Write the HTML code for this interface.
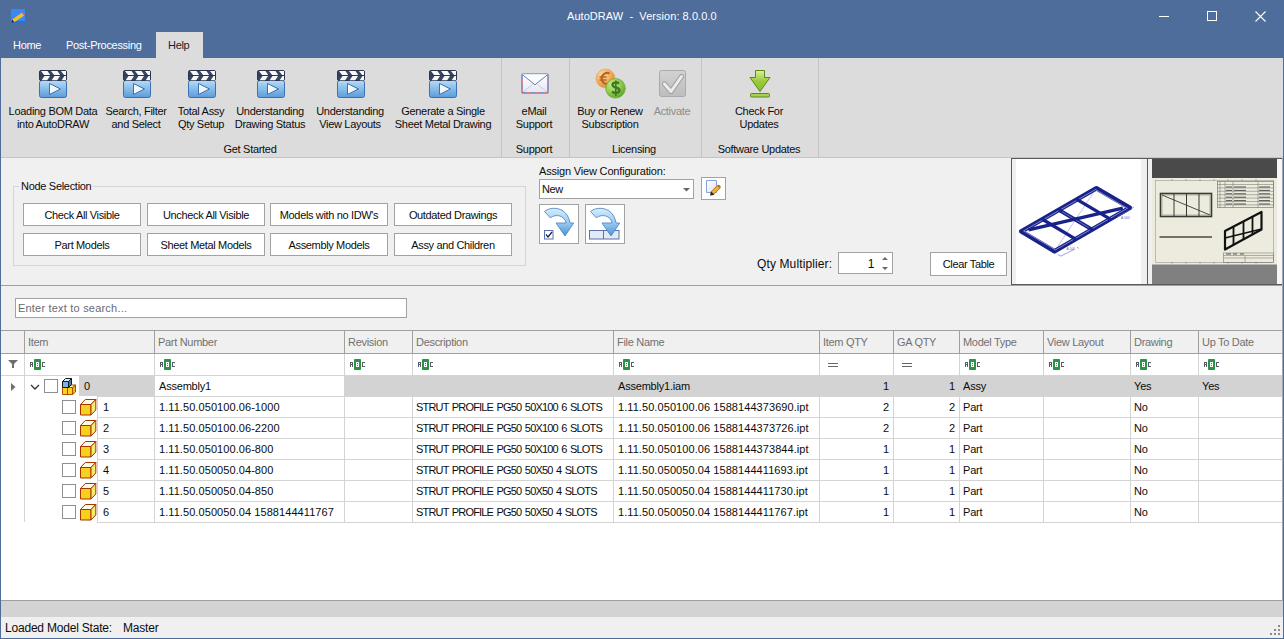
<!DOCTYPE html>
<html><head><meta charset="utf-8">
<style>
*{margin:0;padding:0;box-sizing:border-box}
html,body{width:1284px;height:639px;overflow:hidden;background:#f0f0f0}
body{position:relative;font-family:"Liberation Sans",sans-serif;font-size:11px;color:#0c0c0c}
.a{position:absolute}
.t{position:absolute;white-space:nowrap;line-height:13px;letter-spacing:-0.3px}
#title{left:0;top:0;width:1284px;height:58px;background:#4e6d9b}
#ribbon{left:1px;top:58px;width:1283px;height:100px;background:#dcdcdc;border-bottom:1px solid #c4c4c4}
.sep{position:absolute;top:0;width:1px;height:99px;background:#c4c4c4}
.lbl{text-align:center}
.btn{position:absolute;background:#fff;border:1px solid #a2a2a2}
.btn span{position:absolute;left:0;right:0;top:5px;text-align:center;line-height:13px;white-space:nowrap;letter-spacing:-0.35px}
#panel{left:1px;top:158px;width:1283px;height:128px;background:#f0f0f0;border-bottom:1px solid #a0a0a0}
#grid{left:1px;top:286px;width:1282px;height:315px;background:#fff}
.vl{position:absolute;width:1px;background:#d2d2d2}
.hl{position:absolute;height:1px;background:#d2d2d2}
.hd{color:#707070}
</style></head><body>
<!-- title bar -->
<div id="title" class="a"></div>
<!-- app icon -->
<svg class="a" style="left:11px;top:9px" width="14" height="14" viewBox="0 0 14 14">
<rect x="0" y="0" width="14" height="14" fill="#3b88f2"/>
<rect x="0" y="12" width="14" height="2" fill="#2f6fd0"/>
<path d="M1.2 10.5L9.8 4.6L11.8 7.6L3.2 13.2Z" fill="#f5c11a"/>
<path d="M9.8 4.6L11 3.8L13 6.8L11.8 7.6Z" fill="#c8ccd0"/>
<path d="M11 3.8L12.2 3L14 5.9L13 6.8Z" fill="#f05a40"/>
<path d="M1.2 10.5L3.2 13.2L0.8 13.2Z" fill="#222"/>
</svg>
<div class="t" style="left:567px;top:10px;color:#fff;font-size:11px;letter-spacing:0.05px">AutoDRAW&nbsp; -&nbsp; Version: 8.0.0.0</div>
<!-- window controls -->
<div class="a" style="left:1159px;top:16px;width:10px;height:1px;background:#fff"></div>
<div class="a" style="left:1207px;top:11px;width:10px;height:10px;border:1px solid #fff"></div>
<svg class="a" style="left:1255px;top:11px" width="11" height="11" viewBox="0 0 11 11"><path d="M0.5 0.5 L10.5 10.5 M10.5 0.5 L0.5 10.5" stroke="#fff" stroke-width="1.1"/></svg>
<!-- tabs -->
<div class="t" style="left:13px;top:39px;color:#fff">Home</div>
<div class="t" style="left:66px;top:39px;color:#fff">Post-Processing</div>
<div class="a" style="left:156px;top:32px;width:47px;height:27px;background:#dcdcdc"></div>
<div class="t" style="left:168px;top:39px;color:#1e1e1e">Help</div>

<!-- ribbon -->
<div id="ribbon" class="a">
  <div class="sep" style="left:500px"></div>
  <div class="sep" style="left:568px"></div>
  <div class="sep" style="left:700px"></div>
  <div class="sep" style="left:817px"></div>
</div>

<!-- ribbon labels -->
<div class="t lbl" style="left:3px;top:105px;width:100px">Loading BOM Data<br>into AutoDRAW</div>
<div class="t lbl" style="left:96px;top:105px;width:80px">Search, Filter<br>and Select</div>
<div class="t lbl" style="left:166px;top:105px;width:70px">Total Assy<br>Qty Setup</div>
<div class="t lbl" style="left:225px;top:105px;width:90px">Understanding<br>Drawing Status</div>
<div class="t lbl" style="left:305px;top:105px;width:90px">Understanding<br>View Layouts</div>
<div class="t lbl" style="left:385px;top:105px;width:116px">Generate a Single<br>Sheet Metal Drawing</div>
<div class="t lbl" style="left:504px;top:105px;width:60px">eMail<br>Support</div>
<div class="t lbl" style="left:570px;top:105px;width:80px">Buy or Renew<br>Subscription</div>
<div class="t lbl" style="left:642px;top:105px;width:60px;color:#8c8c8c">Activate</div>
<div class="t lbl" style="left:719px;top:105px;width:80px">Check For<br>Updates</div>
<div class="t lbl" style="left:200px;top:143px;width:100px">Get Started</div>
<div class="t lbl" style="left:504px;top:143px;width:60px">Support</div>
<div class="t lbl" style="left:594px;top:143px;width:80px">Licensing</div>
<div class="t lbl" style="left:709px;top:143px;width:100px">Software Updates</div>

<!-- panel -->
<div id="panel" class="a"></div>
<div class="a" style="left:13px;top:186px;width:513px;height:80px;border:1px solid #d5d5d5"></div>
<div class="t" style="left:19px;top:180px;padding:0 2px;background:#f0f0f0">Node Selection</div>
<div class="btn" style="left:23px;top:203px;width:118px;height:23px"><span>Check All Visible</span></div>
<div class="btn" style="left:147px;top:203px;width:118px;height:23px"><span>Uncheck All Visible</span></div>
<div class="btn" style="left:270px;top:203px;width:118px;height:23px"><span>Models with no IDW's</span></div>
<div class="btn" style="left:394px;top:203px;width:118px;height:23px"><span>Outdated Drawings</span></div>
<div class="btn" style="left:23px;top:233px;width:118px;height:23px"><span>Part Models</span></div>
<div class="btn" style="left:147px;top:233px;width:118px;height:23px"><span>Sheet Metal Models</span></div>
<div class="btn" style="left:270px;top:233px;width:118px;height:23px"><span>Assembly Models</span></div>
<div class="btn" style="left:394px;top:233px;width:118px;height:23px"><span>Assy and Children</span></div>

<div class="t" style="left:539px;top:165px;letter-spacing:-0.18px">Assign View Configuration:</div>
<div class="btn" style="left:539px;top:179px;width:155px;height:20px"><span style="text-align:left;left:2px;top:3px">New</span></div>
<svg class="a" style="left:683px;top:188px" width="7" height="4" viewBox="0 0 7 4"><path d="M0 0H7L3.5 3.5Z" fill="#666"/></svg>
<div class="btn" style="left:701px;top:177px;width:25px;height:23px"></div>
<div class="btn" style="left:539px;top:204px;width:40px;height:40px"></div>
<div class="btn" style="left:585px;top:204px;width:40px;height:40px"></div>
<div class="t" style="left:757px;top:258px;font-size:12px;letter-spacing:0.12px">Qty Multiplier:</div>
<div class="btn" style="left:838px;top:252px;width:55px;height:22px"><span style="text-align:right;left:auto;right:18px;top:5px;font-size:12px">1</span></div>
<svg class="a" style="left:882px;top:257px" width="6" height="14" viewBox="0 0 6 14"><path d="M0 3L3 0L6 3ZM0 10L3 13L6 10Z" fill="#6a6a6a"/></svg>
<div class="btn" style="left:930px;top:252px;width:77px;height:24px"><span>Clear Table</span></div>
<!-- thumbnails -->
<div class="a" style="left:1011px;top:158px;width:271px;height:127px;background:#f0f0f0;border-top:1px solid #5a5a5a;border-left:1px solid #5a5a5a;border-bottom:1px solid #5a5a5a"></div>
<div class="a" style="left:1016px;top:159px;width:125px;height:125px;background:#fff"></div>
<div class="a" style="left:1147px;top:159px;width:1px;height:125px;background:#5a5a5a"></div>
<div class="a" style="left:1277px;top:159px;width:5px;height:125px;background:#f6f6f6"></div>
<svg class="a" style="left:0;top:0" width="1284" height="639" viewBox="0 0 1284 639"><path d="M1021.2,231.4L1096.4,188.2L1129.8,207.8L1054.5,251.3Z" fill="none" stroke="#18228a" stroke-width="4.6" stroke-linejoin="round"/><path d="M1023.6,230.9L1095.5,189.6L1127.4,208.3L1055.4,249.9Z" fill="none" stroke="#c8cdf0" stroke-width="0.6"/><path d="M1093.0,193.2L1057.9,246.3" stroke="#8088d0" stroke-width="0.5"/><path d="M1042.3,219.3L1075.6,239.1" stroke="#18228a" stroke-width="3.4"/><path d="M1058.8,209.8L1092.2,229.6" stroke="#18228a" stroke-width="3.8"/><path d="M1076.8,199.4L1110.2,219.1" stroke="#18228a" stroke-width="3.4"/><path d="M1062.1,211.8L1088.8,227.6" stroke="#b8c0ee" stroke-width="0.5"/><path d="M1028.5,229.8L1122.8,208.2" stroke="#18228a" stroke-width="3.4"/><path d="M1058 254.5l3 1.8M1061 256l13-6.5M1077 247l2 1.5M1117 217l12-6.5M1131 209l3-2" stroke="#5a64c0" stroke-width="0.6" fill="none"/><text x="1066.5" y="250" font-size="3.2" fill="#5a64c0" font-family="Liberation Sans">A-500</text><text x="1121" y="218.5" font-size="3.2" fill="#5a64c0" font-family="Liberation Sans">A-500</text><rect x="1152" y="159" width="125" height="19" fill="#4a4a4a"/><rect x="1152" y="178" width="125" height="86.5" fill="#ecebde"/><rect x="1152" y="264.5" width="125" height="19.5" fill="#808080"/><rect x="1155.5" y="180.5" width="118" height="82" fill="none" stroke="#9a9a90" stroke-width="0.6"/><rect x="1160.5" y="193.5" width="51" height="23" fill="none" stroke="#3a3a35" stroke-width="1.6"/><rect x="1162" y="195" width="48" height="20" fill="none" stroke="#8a8a80" stroke-width="0.6"/><path d="M1174 194v22M1186.5 194v22M1199 194v22" stroke="#3a3a35" stroke-width="1"/><path d="M1162 195L1210 215" stroke="#3a3a35" stroke-width="0.9"/><path d="M1159.5 237h52.5" stroke="#4a4a45" stroke-width="1.4"/><rect x="1217.5" y="181.5" width="56" height="26" fill="none" stroke="#6a6a65" stroke-width="0.6"/><path d="M1217.5 184.5h56" stroke="#6a6a65" stroke-width="0.5"/><path d="M1217.5 187.9h56" stroke="#6a6a65" stroke-width="0.5"/><path d="M1217.5 191.3h56" stroke="#6a6a65" stroke-width="0.5"/><path d="M1217.5 194.7h56" stroke="#6a6a65" stroke-width="0.5"/><path d="M1217.5 198.1h56" stroke="#6a6a65" stroke-width="0.5"/><path d="M1217.5 201.5h56" stroke="#6a6a65" stroke-width="0.5"/><path d="M1217.5 204.9h56" stroke="#6a6a65" stroke-width="0.5"/><path d="M1220 181.5v26M1225 181.5v26M1233 181.5v26M1258 181.5v26" stroke="#6a6a65" stroke-width="0.5"/><path d="M1226 187.0h6M1234 187.0h12M1259 187.0h11" stroke="#444" stroke-width="0.9"/><path d="M1226 190.4h6M1234 190.4h12M1259 190.4h11" stroke="#444" stroke-width="0.9"/><path d="M1226 193.8h6M1234 193.8h12M1259 193.8h11" stroke="#444" stroke-width="0.9"/><path d="M1226 197.2h6M1234 197.2h12M1259 197.2h11" stroke="#444" stroke-width="0.9"/><path d="M1226 200.6h6M1234 200.6h12M1259 200.6h11" stroke="#444" stroke-width="0.9"/><path d="M1226 204.0h6M1234 204.0h12M1259 204.0h11" stroke="#444" stroke-width="0.9"/><path d="M1225 231L1261.5 212V229.5L1225 249.5Z" fill="none" stroke="#111" stroke-width="2.2" stroke-linejoin="round"/><path d="M1233.5 226.5V245M1243.5 221.5V239.5M1252.5 216.5V234.5" stroke="#111" stroke-width="1.8"/><path d="M1225 238L1261.5 229" stroke="#111" stroke-width="1.4"/><rect x="1223.5" y="253" width="50" height="9.5" fill="none" stroke="#6a6a65" stroke-width="0.5"/><path d="M1223.5 255.5h50M1245 255.5v7M1223.5 258h50" stroke="#6a6a65" stroke-width="0.5"/><path d="M1226 254h5M1233 254h4M1240 254h4" stroke="#333" stroke-width="0.8"/><path d="M1172 179v1.5M1172 262v1.5" stroke="#555" stroke-width="0.5"/><path d="M1186 179v1.5M1186 262v1.5" stroke="#555" stroke-width="0.5"/><path d="M1200 179v1.5M1200 262v1.5" stroke="#555" stroke-width="0.5"/><path d="M1214 179v1.5M1214 262v1.5" stroke="#555" stroke-width="0.5"/><path d="M1228 179v1.5M1228 262v1.5" stroke="#555" stroke-width="0.5"/><path d="M1242 179v1.5M1242 262v1.5" stroke="#555" stroke-width="0.5"/><path d="M1256 179v1.5M1256 262v1.5" stroke="#555" stroke-width="0.5"/></svg>


<svg class="a" style="left:39px;top:70px" width="28" height="28" viewBox="0 0 28 28">
<defs><linearGradient id="cg39" x1="0" y1="0" x2="0" y2="1"><stop offset="0" stop-color="#b4dcf8"/><stop offset="1" stop-color="#5b9bdb"/></linearGradient>
<linearGradient id="pg39" x1="0" y1="0" x2="1" y2="1"><stop offset="0" stop-color="#ffffff"/><stop offset="1" stop-color="#dfe8f2"/></linearGradient></defs>
<rect x="0.5" y="10.5" width="27" height="17" rx="2" fill="url(#cg39)" stroke="#3c6fb3"/>
<rect x="0.5" y="0.5" width="27" height="10" rx="1.5" fill="#3a4660" stroke="#2b3550"/>
<clipPath id="cc39"><rect x="1" y="1" width="26" height="9.5"/></clipPath>
<g clip-path="url(#cc39)" fill="#fafafa"><path d="M2 1h6.5l3 4.5h-6zM12 1h6.5l3 4.5h-6zM22 1h6.5l3 4.5h-6z"/>
<path d="M5.5 6h5.5l-3 4.5h-5.5zM15.5 6h5.5l-3 4.5h-5.5zM25.5 6h5.5l-3 4.5h-5.5z"/></g>
<path d="M1 5.5h26" stroke="#2b3550" stroke-width="1"/>
<path d="M10.5 13.5v11l11-5.5z" fill="url(#pg39)" stroke="#3c6fb3" stroke-width="1"/>
</svg>
<svg class="a" style="left:123px;top:70px" width="28" height="28" viewBox="0 0 28 28">
<defs><linearGradient id="cg123" x1="0" y1="0" x2="0" y2="1"><stop offset="0" stop-color="#b4dcf8"/><stop offset="1" stop-color="#5b9bdb"/></linearGradient>
<linearGradient id="pg123" x1="0" y1="0" x2="1" y2="1"><stop offset="0" stop-color="#ffffff"/><stop offset="1" stop-color="#dfe8f2"/></linearGradient></defs>
<rect x="0.5" y="10.5" width="27" height="17" rx="2" fill="url(#cg123)" stroke="#3c6fb3"/>
<rect x="0.5" y="0.5" width="27" height="10" rx="1.5" fill="#3a4660" stroke="#2b3550"/>
<clipPath id="cc123"><rect x="1" y="1" width="26" height="9.5"/></clipPath>
<g clip-path="url(#cc123)" fill="#fafafa"><path d="M2 1h6.5l3 4.5h-6zM12 1h6.5l3 4.5h-6zM22 1h6.5l3 4.5h-6z"/>
<path d="M5.5 6h5.5l-3 4.5h-5.5zM15.5 6h5.5l-3 4.5h-5.5zM25.5 6h5.5l-3 4.5h-5.5z"/></g>
<path d="M1 5.5h26" stroke="#2b3550" stroke-width="1"/>
<path d="M10.5 13.5v11l11-5.5z" fill="url(#pg123)" stroke="#3c6fb3" stroke-width="1"/>
</svg>
<svg class="a" style="left:188px;top:70px" width="28" height="28" viewBox="0 0 28 28">
<defs><linearGradient id="cg188" x1="0" y1="0" x2="0" y2="1"><stop offset="0" stop-color="#b4dcf8"/><stop offset="1" stop-color="#5b9bdb"/></linearGradient>
<linearGradient id="pg188" x1="0" y1="0" x2="1" y2="1"><stop offset="0" stop-color="#ffffff"/><stop offset="1" stop-color="#dfe8f2"/></linearGradient></defs>
<rect x="0.5" y="10.5" width="27" height="17" rx="2" fill="url(#cg188)" stroke="#3c6fb3"/>
<rect x="0.5" y="0.5" width="27" height="10" rx="1.5" fill="#3a4660" stroke="#2b3550"/>
<clipPath id="cc188"><rect x="1" y="1" width="26" height="9.5"/></clipPath>
<g clip-path="url(#cc188)" fill="#fafafa"><path d="M2 1h6.5l3 4.5h-6zM12 1h6.5l3 4.5h-6zM22 1h6.5l3 4.5h-6z"/>
<path d="M5.5 6h5.5l-3 4.5h-5.5zM15.5 6h5.5l-3 4.5h-5.5zM25.5 6h5.5l-3 4.5h-5.5z"/></g>
<path d="M1 5.5h26" stroke="#2b3550" stroke-width="1"/>
<path d="M10.5 13.5v11l11-5.5z" fill="url(#pg188)" stroke="#3c6fb3" stroke-width="1"/>
</svg>
<svg class="a" style="left:257px;top:70px" width="28" height="28" viewBox="0 0 28 28">
<defs><linearGradient id="cg257" x1="0" y1="0" x2="0" y2="1"><stop offset="0" stop-color="#b4dcf8"/><stop offset="1" stop-color="#5b9bdb"/></linearGradient>
<linearGradient id="pg257" x1="0" y1="0" x2="1" y2="1"><stop offset="0" stop-color="#ffffff"/><stop offset="1" stop-color="#dfe8f2"/></linearGradient></defs>
<rect x="0.5" y="10.5" width="27" height="17" rx="2" fill="url(#cg257)" stroke="#3c6fb3"/>
<rect x="0.5" y="0.5" width="27" height="10" rx="1.5" fill="#3a4660" stroke="#2b3550"/>
<clipPath id="cc257"><rect x="1" y="1" width="26" height="9.5"/></clipPath>
<g clip-path="url(#cc257)" fill="#fafafa"><path d="M2 1h6.5l3 4.5h-6zM12 1h6.5l3 4.5h-6zM22 1h6.5l3 4.5h-6z"/>
<path d="M5.5 6h5.5l-3 4.5h-5.5zM15.5 6h5.5l-3 4.5h-5.5zM25.5 6h5.5l-3 4.5h-5.5z"/></g>
<path d="M1 5.5h26" stroke="#2b3550" stroke-width="1"/>
<path d="M10.5 13.5v11l11-5.5z" fill="url(#pg257)" stroke="#3c6fb3" stroke-width="1"/>
</svg>
<svg class="a" style="left:337px;top:70px" width="28" height="28" viewBox="0 0 28 28">
<defs><linearGradient id="cg337" x1="0" y1="0" x2="0" y2="1"><stop offset="0" stop-color="#b4dcf8"/><stop offset="1" stop-color="#5b9bdb"/></linearGradient>
<linearGradient id="pg337" x1="0" y1="0" x2="1" y2="1"><stop offset="0" stop-color="#ffffff"/><stop offset="1" stop-color="#dfe8f2"/></linearGradient></defs>
<rect x="0.5" y="10.5" width="27" height="17" rx="2" fill="url(#cg337)" stroke="#3c6fb3"/>
<rect x="0.5" y="0.5" width="27" height="10" rx="1.5" fill="#3a4660" stroke="#2b3550"/>
<clipPath id="cc337"><rect x="1" y="1" width="26" height="9.5"/></clipPath>
<g clip-path="url(#cc337)" fill="#fafafa"><path d="M2 1h6.5l3 4.5h-6zM12 1h6.5l3 4.5h-6zM22 1h6.5l3 4.5h-6z"/>
<path d="M5.5 6h5.5l-3 4.5h-5.5zM15.5 6h5.5l-3 4.5h-5.5zM25.5 6h5.5l-3 4.5h-5.5z"/></g>
<path d="M1 5.5h26" stroke="#2b3550" stroke-width="1"/>
<path d="M10.5 13.5v11l11-5.5z" fill="url(#pg337)" stroke="#3c6fb3" stroke-width="1"/>
</svg>
<svg class="a" style="left:429px;top:70px" width="28" height="28" viewBox="0 0 28 28">
<defs><linearGradient id="cg429" x1="0" y1="0" x2="0" y2="1"><stop offset="0" stop-color="#b4dcf8"/><stop offset="1" stop-color="#5b9bdb"/></linearGradient>
<linearGradient id="pg429" x1="0" y1="0" x2="1" y2="1"><stop offset="0" stop-color="#ffffff"/><stop offset="1" stop-color="#dfe8f2"/></linearGradient></defs>
<rect x="0.5" y="10.5" width="27" height="17" rx="2" fill="url(#cg429)" stroke="#3c6fb3"/>
<rect x="0.5" y="0.5" width="27" height="10" rx="1.5" fill="#3a4660" stroke="#2b3550"/>
<clipPath id="cc429"><rect x="1" y="1" width="26" height="9.5"/></clipPath>
<g clip-path="url(#cc429)" fill="#fafafa"><path d="M2 1h6.5l3 4.5h-6zM12 1h6.5l3 4.5h-6zM22 1h6.5l3 4.5h-6z"/>
<path d="M5.5 6h5.5l-3 4.5h-5.5zM15.5 6h5.5l-3 4.5h-5.5zM25.5 6h5.5l-3 4.5h-5.5z"/></g>
<path d="M1 5.5h26" stroke="#2b3550" stroke-width="1"/>
<path d="M10.5 13.5v11l11-5.5z" fill="url(#pg429)" stroke="#3c6fb3" stroke-width="1"/>
</svg>
<svg class="a" style="left:521px;top:73px" width="28" height="21" viewBox="0 0 28 21">
<defs><linearGradient id="eg" x1="0" y1="0" x2="0" y2="1"><stop offset="0" stop-color="#ffffff"/><stop offset="1" stop-color="#e4e8f0"/></linearGradient>
<pattern id="air" width="6" height="6" patternUnits="userSpaceOnUse" patternTransform="rotate(45)"><rect width="3" height="6" fill="#d83a40"/><rect x="3" width="3" height="6" fill="#3a5ab8"/></pattern></defs>
<rect x="0.5" y="0.5" width="27" height="20" rx="1.5" fill="url(#air)"/>
<rect x="1.6" y="1.2" width="24.8" height="18.2" fill="url(#eg)"/>
<rect x="0.5" y="0.5" width="27" height="1.2" fill="#c8d0e8"/>
<path d="M2 19l9.5-7.5M26 19l-9.5-7.5" stroke="#c4cad8" stroke-width="0.9" fill="none"/>
<path d="M1.2 1.5l12.8 10.3l12.8-10.3" stroke="#6a7aae" stroke-width="1" fill="#fafbfd"/>
<rect x="0.5" y="0.5" width="27" height="20" rx="1.5" fill="none" stroke="#8a98c8" stroke-width="0.6"/>
</svg>
<svg class="a" style="left:595px;top:68px" width="32" height="31" viewBox="0 0 32 31">
<defs><radialGradient id="og" cx="0.35" cy="0.3" r="0.75"><stop offset="0" stop-color="#fde0a8"/><stop offset="0.6" stop-color="#f0a850"/><stop offset="1" stop-color="#d88a38"/></radialGradient>
<radialGradient id="gg" cx="0.35" cy="0.3" r="0.75"><stop offset="0" stop-color="#c8ec90"/><stop offset="0.6" stop-color="#8cc84a"/><stop offset="1" stop-color="#5ea32a"/></radialGradient></defs>
<circle cx="10.5" cy="10.5" r="9.5" fill="url(#og)" stroke="#e8a868" stroke-width="0.8"/>
<path d="M14.5 5.5a5.5 5.5 0 1 0 0 10" stroke="#b8652a" stroke-width="2.2" fill="none"/>
<path d="M4.5 9h7M4.5 12h7" stroke="#b8652a" stroke-width="1.3"/>
<circle cx="20.5" cy="20.3" r="9.8" fill="url(#gg)" stroke="#6aac38" stroke-width="0.8"/>
<path d="M24 15.5c-1.5-1.3-6.5-1.6-6.5 1.5c0 3 7 2 7 5.3c0 3.2-5.5 3-7.5 1.5" stroke="#3f7a22" stroke-width="2.4" fill="none"/>
<path d="M20.8 12.5v15.5" stroke="#3f7a22" stroke-width="1.6"/>
</svg>
<svg class="a" style="left:659px;top:70px" width="27" height="27" viewBox="0 0 27 27">
<defs><linearGradient id="ag" x1="0" y1="0" x2="0" y2="1"><stop offset="0" stop-color="#d2d2d2"/><stop offset="1" stop-color="#bdbdbd"/></linearGradient></defs>
<rect x="0.5" y="0.5" width="26" height="26" rx="2" fill="url(#ag)" stroke="#aaaaaa"/>
<path d="M5.5 14l6.5 7.5l10.5-15" stroke="#a2a2a2" stroke-width="5" fill="none" stroke-linejoin="round" stroke-linecap="round"/>
<path d="M5.5 14l6.5 7.5l10.5-15" stroke="#ececec" stroke-width="3" fill="none" stroke-linejoin="round" stroke-linecap="round"/>
</svg>
<svg class="a" style="left:749px;top:69px" width="22" height="29" viewBox="0 0 22 29">
<defs><linearGradient id="dg" x1="0" y1="0" x2="0" y2="1"><stop offset="0" stop-color="#d8f29a"/><stop offset="0.5" stop-color="#9ccc3c"/><stop offset="1" stop-color="#88bb2a"/></linearGradient></defs>
<path d="M6.5 1.5h9v7h5.5l-10 14l-10-14h5.5z" fill="url(#dg)" stroke="#5a8a1a" stroke-width="1" stroke-linejoin="round"/>
<rect x="1.5" y="24.5" width="19" height="3.5" rx="1" fill="#a4d24a" stroke="#5a8a1a" stroke-width="1"/>
</svg>
<svg class="a" style="left:705px;top:179px" width="17" height="18" viewBox="0 0 17 18">
<defs><linearGradient id="pgd" x1="0" y1="0" x2="1" y2="1"><stop offset="0" stop-color="#ffffff"/><stop offset="1" stop-color="#dbe6f5"/></linearGradient></defs>
<path d="M1.5 1.5h10v12h-10z" fill="url(#pgd)" stroke="#8aa2e0" stroke-width="1"/>
<path d="M7.5 14L13.5 8" stroke="#b86d10" stroke-width="4.4" stroke-linecap="round"/>
<path d="M7.5 14L13.5 8" stroke="#f0b040" stroke-width="3"/>
<path d="M5 16.8l1.2-4.2l3 3z" fill="#1a2540"/>
</svg>
<svg class="a" style="left:539px;top:204px" width="40" height="40" viewBox="0 0 40 40">
<defs><linearGradient id="ba1" x1="0" y1="0" x2="0" y2="1"><stop offset="0" stop-color="#d6eefc"/><stop offset="0.55" stop-color="#94c8ee"/><stop offset="1" stop-color="#4e8fd2"/></linearGradient></defs>
<rect x="5.5" y="26.5" width="8.5" height="8.5" fill="#fff" stroke="#5a70b0"/><path d="M7 30.5l2 2.5l4-5" stroke="#1c2540" stroke-width="1.3" fill="none"/>
<path d="M5.5 7.5C11 2.5 28 1.5 31 19H34.7L26 32L17 19H27.2C25.5 11.5 17 9.5 11.3 13.8Z" fill="url(#ba1)" stroke="#5088c8" stroke-width="0.9" stroke-linejoin="round"/>
</svg>
<svg class="a" style="left:585px;top:204px" width="40" height="40" viewBox="0 0 40 40">
<defs><linearGradient id="ba2" x1="0" y1="0" x2="0" y2="1"><stop offset="0" stop-color="#d6eefc"/><stop offset="0.55" stop-color="#94c8ee"/><stop offset="1" stop-color="#4e8fd2"/></linearGradient></defs>
<rect x="4.5" y="26.5" width="29.5" height="8.5" fill="#e4eaf4" stroke="#5a70b0"/><path d="M18.5 26.5v8.5" stroke="#5a70b0"/>
<path d="M5.5 7.5C11 2.5 28 1.5 31 19H34.7L26 32L17 19H27.2C25.5 11.5 17 9.5 11.3 13.8Z" fill="url(#ba2)" stroke="#5088c8" stroke-width="0.9" stroke-linejoin="round"/>
</svg>
<!-- search -->
<div class="a" style="left:1px;top:286px;width:1282px;height:44px;background:#f0f0f0"></div>
<div class="btn" style="left:15px;top:298px;width:392px;height:20px"><span style="text-align:left;left:2px;top:3px;color:#6a6a72;letter-spacing:0.2px">Enter text to search...</span></div>

<!-- grid -->
<div class="a" style="left:1px;top:330px;width:1282px;height:271px;background:#fff;border-top:1px solid #a0a0a0;border-bottom:1px solid #a0a0a0;border-right:1px solid #a0a0a0"></div>
<div class="a" style="left:1px;top:331px;width:1281px;height:22px;background:#f0f0f0;"></div>
<div class="a" style="left:1px;top:353px;width:1281px;height:1px;background:#a0a0a0;"></div>
<div class="a" style="left:1px;top:375px;width:1281px;height:1px;background:#d4d4d4;"></div>
<div class="a" style="left:79px;top:376px;width:1203px;height:20px;background:#d3d3d3;"></div>
<div class="a" style="left:155px;top:376px;width:189px;height:20px;background:#ffffff;"></div>
<div class="a" style="left:97px;top:396px;width:1185px;height:1px;background:#d4d4d4;"></div>
<div class="a" style="left:97px;top:417px;width:1185px;height:1px;background:#d4d4d4;"></div>
<div class="a" style="left:97px;top:438px;width:1185px;height:1px;background:#d4d4d4;"></div>
<div class="a" style="left:97px;top:459px;width:1185px;height:1px;background:#d4d4d4;"></div>
<div class="a" style="left:97px;top:480px;width:1185px;height:1px;background:#d4d4d4;"></div>
<div class="a" style="left:97px;top:501px;width:1185px;height:1px;background:#d4d4d4;"></div>
<div class="a" style="left:97px;top:522px;width:1185px;height:1px;background:#d4d4d4;"></div>
<div class="a" style="left:24px;top:331px;width:1px;height:22px;background:#a0a0a0;"></div>
<div class="a" style="left:24px;top:354px;width:1px;height:168px;background:#d4d4d4;"></div>
<div class="a" style="left:154px;top:331px;width:1px;height:22px;background:#a0a0a0;"></div>
<div class="a" style="left:154px;top:354px;width:1px;height:42px;background:#d4d4d4;"></div>
<div class="a" style="left:154px;top:397px;width:1px;height:125px;background:#d4d4d4;"></div>
<div class="a" style="left:344px;top:331px;width:1px;height:22px;background:#a0a0a0;"></div>
<div class="a" style="left:344px;top:354px;width:1px;height:42px;background:#d4d4d4;"></div>
<div class="a" style="left:344px;top:397px;width:1px;height:125px;background:#d4d4d4;"></div>
<div class="a" style="left:412px;top:331px;width:1px;height:22px;background:#a0a0a0;"></div>
<div class="a" style="left:412px;top:354px;width:1px;height:42px;background:#d4d4d4;"></div>
<div class="a" style="left:412px;top:397px;width:1px;height:125px;background:#d4d4d4;"></div>
<div class="a" style="left:613px;top:331px;width:1px;height:22px;background:#a0a0a0;"></div>
<div class="a" style="left:613px;top:354px;width:1px;height:42px;background:#d4d4d4;"></div>
<div class="a" style="left:613px;top:397px;width:1px;height:125px;background:#d4d4d4;"></div>
<div class="a" style="left:819px;top:331px;width:1px;height:22px;background:#a0a0a0;"></div>
<div class="a" style="left:819px;top:354px;width:1px;height:42px;background:#d4d4d4;"></div>
<div class="a" style="left:819px;top:397px;width:1px;height:125px;background:#d4d4d4;"></div>
<div class="a" style="left:893px;top:331px;width:1px;height:22px;background:#a0a0a0;"></div>
<div class="a" style="left:893px;top:354px;width:1px;height:42px;background:#d4d4d4;"></div>
<div class="a" style="left:893px;top:397px;width:1px;height:125px;background:#d4d4d4;"></div>
<div class="a" style="left:959px;top:331px;width:1px;height:22px;background:#a0a0a0;"></div>
<div class="a" style="left:959px;top:354px;width:1px;height:42px;background:#d4d4d4;"></div>
<div class="a" style="left:959px;top:397px;width:1px;height:125px;background:#d4d4d4;"></div>
<div class="a" style="left:1043px;top:331px;width:1px;height:22px;background:#a0a0a0;"></div>
<div class="a" style="left:1043px;top:354px;width:1px;height:42px;background:#d4d4d4;"></div>
<div class="a" style="left:1043px;top:397px;width:1px;height:125px;background:#d4d4d4;"></div>
<div class="a" style="left:1130px;top:331px;width:1px;height:22px;background:#a0a0a0;"></div>
<div class="a" style="left:1130px;top:354px;width:1px;height:42px;background:#d4d4d4;"></div>
<div class="a" style="left:1130px;top:397px;width:1px;height:125px;background:#d4d4d4;"></div>
<div class="a" style="left:1198px;top:331px;width:1px;height:22px;background:#a0a0a0;"></div>
<div class="a" style="left:1198px;top:354px;width:1px;height:42px;background:#d4d4d4;"></div>
<div class="a" style="left:1198px;top:397px;width:1px;height:125px;background:#d4d4d4;"></div>
<div class="a" style="left:97px;top:397px;width:1px;height:125px;background:#d4d4d4;"></div>
<div class="t" style="left:28px;top:336px;color:#707070">Item</div>
<div class="t" style="left:158px;top:336px;color:#707070">Part Number</div>
<div class="t" style="left:348px;top:336px;color:#707070">Revision</div>
<div class="t" style="left:416px;top:336px;color:#707070">Description</div>
<div class="t" style="left:617px;top:336px;color:#707070">File Name</div>
<div class="t" style="left:823px;top:336px;color:#707070">Item QTY</div>
<div class="t" style="left:897px;top:336px;color:#707070">GA QTY</div>
<div class="t" style="left:963px;top:336px;color:#707070">Model Type</div>
<div class="t" style="left:1047px;top:336px;color:#707070">View Layout</div>
<div class="t" style="left:1134px;top:336px;color:#707070">Drawing</div>
<div class="t" style="left:1202px;top:336px;color:#707070">Up To Date</div>
<svg class="a" style="left:8px;top:360px" width="10" height="8" viewBox="0 0 10 8"><path d="M0 0H10L6 4V8H4V4Z" fill="#6e6e6e"/></svg>
<svg class="a" style="left:30px;top:359px" width="16" height="11" viewBox="0 0 16 11"><path d="M0 3h3v5h-1v-2h-1v2h-1zM1 4v1h1v-1z" fill="#5a5a66" fill-rule="evenodd"/><rect x="4" y="0" width="7" height="11" rx="0.8" fill="#2a9446"/><path d="M6 3h3v5h-3zM7 4v1h1v-1zM7 6v1h1v-1z" fill="#fff" fill-rule="evenodd"/><path d="M12 3h3v1h-2v3h2v1h-3z" fill="#5a5a66"/></svg>
<svg class="a" style="left:160px;top:359px" width="16" height="11" viewBox="0 0 16 11"><path d="M0 3h3v5h-1v-2h-1v2h-1zM1 4v1h1v-1z" fill="#5a5a66" fill-rule="evenodd"/><rect x="4" y="0" width="7" height="11" rx="0.8" fill="#2a9446"/><path d="M6 3h3v5h-3zM7 4v1h1v-1zM7 6v1h1v-1z" fill="#fff" fill-rule="evenodd"/><path d="M12 3h3v1h-2v3h2v1h-3z" fill="#5a5a66"/></svg>
<svg class="a" style="left:350px;top:359px" width="16" height="11" viewBox="0 0 16 11"><path d="M0 3h3v5h-1v-2h-1v2h-1zM1 4v1h1v-1z" fill="#5a5a66" fill-rule="evenodd"/><rect x="4" y="0" width="7" height="11" rx="0.8" fill="#2a9446"/><path d="M6 3h3v5h-3zM7 4v1h1v-1zM7 6v1h1v-1z" fill="#fff" fill-rule="evenodd"/><path d="M12 3h3v1h-2v3h2v1h-3z" fill="#5a5a66"/></svg>
<svg class="a" style="left:418px;top:359px" width="16" height="11" viewBox="0 0 16 11"><path d="M0 3h3v5h-1v-2h-1v2h-1zM1 4v1h1v-1z" fill="#5a5a66" fill-rule="evenodd"/><rect x="4" y="0" width="7" height="11" rx="0.8" fill="#2a9446"/><path d="M6 3h3v5h-3zM7 4v1h1v-1zM7 6v1h1v-1z" fill="#fff" fill-rule="evenodd"/><path d="M12 3h3v1h-2v3h2v1h-3z" fill="#5a5a66"/></svg>
<svg class="a" style="left:619px;top:359px" width="16" height="11" viewBox="0 0 16 11"><path d="M0 3h3v5h-1v-2h-1v2h-1zM1 4v1h1v-1z" fill="#5a5a66" fill-rule="evenodd"/><rect x="4" y="0" width="7" height="11" rx="0.8" fill="#2a9446"/><path d="M6 3h3v5h-3zM7 4v1h1v-1zM7 6v1h1v-1z" fill="#fff" fill-rule="evenodd"/><path d="M12 3h3v1h-2v3h2v1h-3z" fill="#5a5a66"/></svg>
<div class="a" style="left:828px;top:363px;width:10px;height:1px;background:#666;"></div>
<div class="a" style="left:828px;top:366px;width:10px;height:1px;background:#666;"></div>
<div class="a" style="left:902px;top:363px;width:10px;height:1px;background:#666;"></div>
<div class="a" style="left:902px;top:366px;width:10px;height:1px;background:#666;"></div>
<svg class="a" style="left:965px;top:359px" width="16" height="11" viewBox="0 0 16 11"><path d="M0 3h3v5h-1v-2h-1v2h-1zM1 4v1h1v-1z" fill="#5a5a66" fill-rule="evenodd"/><rect x="4" y="0" width="7" height="11" rx="0.8" fill="#2a9446"/><path d="M6 3h3v5h-3zM7 4v1h1v-1zM7 6v1h1v-1z" fill="#fff" fill-rule="evenodd"/><path d="M12 3h3v1h-2v3h2v1h-3z" fill="#5a5a66"/></svg>
<svg class="a" style="left:1049px;top:359px" width="16" height="11" viewBox="0 0 16 11"><path d="M0 3h3v5h-1v-2h-1v2h-1zM1 4v1h1v-1z" fill="#5a5a66" fill-rule="evenodd"/><rect x="4" y="0" width="7" height="11" rx="0.8" fill="#2a9446"/><path d="M6 3h3v5h-3zM7 4v1h1v-1zM7 6v1h1v-1z" fill="#fff" fill-rule="evenodd"/><path d="M12 3h3v1h-2v3h2v1h-3z" fill="#5a5a66"/></svg>
<svg class="a" style="left:1136px;top:359px" width="16" height="11" viewBox="0 0 16 11"><path d="M0 3h3v5h-1v-2h-1v2h-1zM1 4v1h1v-1z" fill="#5a5a66" fill-rule="evenodd"/><rect x="4" y="0" width="7" height="11" rx="0.8" fill="#2a9446"/><path d="M6 3h3v5h-3zM7 4v1h1v-1zM7 6v1h1v-1z" fill="#fff" fill-rule="evenodd"/><path d="M12 3h3v1h-2v3h2v1h-3z" fill="#5a5a66"/></svg>
<svg class="a" style="left:1204px;top:359px" width="16" height="11" viewBox="0 0 16 11"><path d="M0 3h3v5h-1v-2h-1v2h-1zM1 4v1h1v-1z" fill="#5a5a66" fill-rule="evenodd"/><rect x="4" y="0" width="7" height="11" rx="0.8" fill="#2a9446"/><path d="M6 3h3v5h-3zM7 4v1h1v-1zM7 6v1h1v-1z" fill="#fff" fill-rule="evenodd"/><path d="M12 3h3v1h-2v3h2v1h-3z" fill="#5a5a66"/></svg>
<svg class="a" style="left:11px;top:383px" width="5" height="8" viewBox="0 0 5 8"><path d="M0 0L4.5 4L0 8Z" fill="#707070"/></svg>
<svg class="a" style="left:30px;top:384px" width="10" height="6" viewBox="0 0 10 6"><path d="M1 1L5 5L9 1" stroke="#333" stroke-width="1.3" fill="none"/></svg>
<div class="a" style="left:44px;top:379px;width:14px;height:14px;border:1px solid #8f8f8f;background:#fff"></div>
<svg class="a" style="left:62px;top:378px" width="17" height="17" viewBox="0 0 17 17"><path d="M0.5 9.5h10v7h-10z" fill="#ffd21f" stroke="#b24a00"/><path d="M5.5 9.5v7" stroke="#b24a00"/><path d="M10.5 9.5l3-2.5v7l-3 2.5z" fill="#d8c020" stroke="#b24a00"/><path d="M5.5 9.5l3-2.5h5l-3 2.5z" fill="#fff3a0" stroke="#b24a00"/><path d="M0.5 3.5h6v6h-6z" fill="#7fb2e8" stroke="#1b1b1b"/><path d="M0.5 3.5l3-3h6l-3 3z" fill="#d6ecff" stroke="#1b1b1b"/><path d="M6.5 3.5l3-3v6l-3 3z" fill="#3d78c0" stroke="#1b1b1b"/></svg>
<div class="t" style="left:84px;top:380px">0</div>
<div class="t" style="left:159px;top:380px;letter-spacing:-0.2px">Assembly1</div>
<div class="t" style="left:618px;top:380px;letter-spacing:-0.2px">Assembly1.iam</div>
<div class="t" style="right:395px;top:380px;letter-spacing:0">1</div>
<div class="t" style="right:329px;top:380px;letter-spacing:0">1</div>
<div class="t" style="left:963px;top:380px;letter-spacing:-0.2px">Assy</div>
<div class="t" style="left:1134px;top:380px;letter-spacing:-0.2px">Yes</div>
<div class="t" style="left:1202px;top:380px;letter-spacing:-0.2px">Yes</div>
<div class="a" style="left:62px;top:400px;width:14px;height:14px;border:1px solid #8f8f8f;background:#fff"></div>
<svg class="a" style="left:80px;top:399px" width="17" height="17" viewBox="0 0 17 17"><path d="M0.5 5.5h10.5v10.5h-10.5z" fill="#f7d21c" stroke="#a83200" stroke-width="1"/><path d="M0.5 5.5l4.8-5h10.5l-4.8 5z" fill="#fffbe6" stroke="#a83200" stroke-width="1" stroke-linejoin="round"/><path d="M11 5.5l4.8-5v10.5l-4.8 5z" fill="#f5ea70" stroke="#a83200" stroke-width="1" stroke-linejoin="round"/></svg>
<div class="t" style="left:103px;top:401px;letter-spacing:0px">1</div>
<div class="t" style="left:159px;top:401px;letter-spacing:0.07px">1.11.50.050100.06-1000</div>
<div class="t" style="left:416px;top:401px;letter-spacing:-0.82px;word-spacing:1.2px">STRUT PROFILE PG50 50X100 6 SLOTS</div>
<div class="t" style="left:618px;top:401px;letter-spacing:0.07px">1.11.50.050100.06 1588144373690.ipt</div>
<div class="t" style="right:395px;top:401px;letter-spacing:0">2</div>
<div class="t" style="right:329px;top:401px;letter-spacing:0">2</div>
<div class="t" style="left:963px;top:401px;letter-spacing:-0.2px">Part</div>
<div class="t" style="left:1134px;top:401px;letter-spacing:-0.2px">No</div>
<div class="a" style="left:62px;top:421px;width:14px;height:14px;border:1px solid #8f8f8f;background:#fff"></div>
<svg class="a" style="left:80px;top:420px" width="17" height="17" viewBox="0 0 17 17"><path d="M0.5 5.5h10.5v10.5h-10.5z" fill="#f7d21c" stroke="#a83200" stroke-width="1"/><path d="M0.5 5.5l4.8-5h10.5l-4.8 5z" fill="#fffbe6" stroke="#a83200" stroke-width="1" stroke-linejoin="round"/><path d="M11 5.5l4.8-5v10.5l-4.8 5z" fill="#f5ea70" stroke="#a83200" stroke-width="1" stroke-linejoin="round"/></svg>
<div class="t" style="left:103px;top:422px;letter-spacing:0px">2</div>
<div class="t" style="left:159px;top:422px;letter-spacing:0.07px">1.11.50.050100.06-2200</div>
<div class="t" style="left:416px;top:422px;letter-spacing:-0.82px;word-spacing:1.2px">STRUT PROFILE PG50 50X100 6 SLOTS</div>
<div class="t" style="left:618px;top:422px;letter-spacing:0.07px">1.11.50.050100.06 1588144373726.ipt</div>
<div class="t" style="right:395px;top:422px;letter-spacing:0">2</div>
<div class="t" style="right:329px;top:422px;letter-spacing:0">2</div>
<div class="t" style="left:963px;top:422px;letter-spacing:-0.2px">Part</div>
<div class="t" style="left:1134px;top:422px;letter-spacing:-0.2px">No</div>
<div class="a" style="left:62px;top:442px;width:14px;height:14px;border:1px solid #8f8f8f;background:#fff"></div>
<svg class="a" style="left:80px;top:441px" width="17" height="17" viewBox="0 0 17 17"><path d="M0.5 5.5h10.5v10.5h-10.5z" fill="#f7d21c" stroke="#a83200" stroke-width="1"/><path d="M0.5 5.5l4.8-5h10.5l-4.8 5z" fill="#fffbe6" stroke="#a83200" stroke-width="1" stroke-linejoin="round"/><path d="M11 5.5l4.8-5v10.5l-4.8 5z" fill="#f5ea70" stroke="#a83200" stroke-width="1" stroke-linejoin="round"/></svg>
<div class="t" style="left:103px;top:443px;letter-spacing:0px">3</div>
<div class="t" style="left:159px;top:443px;letter-spacing:0.07px">1.11.50.050100.06-800</div>
<div class="t" style="left:416px;top:443px;letter-spacing:-0.82px;word-spacing:1.2px">STRUT PROFILE PG50 50X100 6 SLOTS</div>
<div class="t" style="left:618px;top:443px;letter-spacing:0.07px">1.11.50.050100.06 1588144373844.ipt</div>
<div class="t" style="right:395px;top:443px;letter-spacing:0">1</div>
<div class="t" style="right:329px;top:443px;letter-spacing:0">1</div>
<div class="t" style="left:963px;top:443px;letter-spacing:-0.2px">Part</div>
<div class="t" style="left:1134px;top:443px;letter-spacing:-0.2px">No</div>
<div class="a" style="left:62px;top:463px;width:14px;height:14px;border:1px solid #8f8f8f;background:#fff"></div>
<svg class="a" style="left:80px;top:462px" width="17" height="17" viewBox="0 0 17 17"><path d="M0.5 5.5h10.5v10.5h-10.5z" fill="#f7d21c" stroke="#a83200" stroke-width="1"/><path d="M0.5 5.5l4.8-5h10.5l-4.8 5z" fill="#fffbe6" stroke="#a83200" stroke-width="1" stroke-linejoin="round"/><path d="M11 5.5l4.8-5v10.5l-4.8 5z" fill="#f5ea70" stroke="#a83200" stroke-width="1" stroke-linejoin="round"/></svg>
<div class="t" style="left:103px;top:464px;letter-spacing:0px">4</div>
<div class="t" style="left:159px;top:464px;letter-spacing:0.07px">1.11.50.050050.04-800</div>
<div class="t" style="left:416px;top:464px;letter-spacing:-0.82px;word-spacing:1.2px">STRUT PROFILE PG50 50X50 4 SLOTS</div>
<div class="t" style="left:618px;top:464px;letter-spacing:0.07px">1.11.50.050050.04 1588144411693.ipt</div>
<div class="t" style="right:395px;top:464px;letter-spacing:0">1</div>
<div class="t" style="right:329px;top:464px;letter-spacing:0">1</div>
<div class="t" style="left:963px;top:464px;letter-spacing:-0.2px">Part</div>
<div class="t" style="left:1134px;top:464px;letter-spacing:-0.2px">No</div>
<div class="a" style="left:62px;top:484px;width:14px;height:14px;border:1px solid #8f8f8f;background:#fff"></div>
<svg class="a" style="left:80px;top:483px" width="17" height="17" viewBox="0 0 17 17"><path d="M0.5 5.5h10.5v10.5h-10.5z" fill="#f7d21c" stroke="#a83200" stroke-width="1"/><path d="M0.5 5.5l4.8-5h10.5l-4.8 5z" fill="#fffbe6" stroke="#a83200" stroke-width="1" stroke-linejoin="round"/><path d="M11 5.5l4.8-5v10.5l-4.8 5z" fill="#f5ea70" stroke="#a83200" stroke-width="1" stroke-linejoin="round"/></svg>
<div class="t" style="left:103px;top:485px;letter-spacing:0px">5</div>
<div class="t" style="left:159px;top:485px;letter-spacing:0.07px">1.11.50.050050.04-850</div>
<div class="t" style="left:416px;top:485px;letter-spacing:-0.82px;word-spacing:1.2px">STRUT PROFILE PG50 50X50 4 SLOTS</div>
<div class="t" style="left:618px;top:485px;letter-spacing:0.07px">1.11.50.050050.04 1588144411730.ipt</div>
<div class="t" style="right:395px;top:485px;letter-spacing:0">1</div>
<div class="t" style="right:329px;top:485px;letter-spacing:0">1</div>
<div class="t" style="left:963px;top:485px;letter-spacing:-0.2px">Part</div>
<div class="t" style="left:1134px;top:485px;letter-spacing:-0.2px">No</div>
<div class="a" style="left:62px;top:505px;width:14px;height:14px;border:1px solid #8f8f8f;background:#fff"></div>
<svg class="a" style="left:80px;top:504px" width="17" height="17" viewBox="0 0 17 17"><path d="M0.5 5.5h10.5v10.5h-10.5z" fill="#f7d21c" stroke="#a83200" stroke-width="1"/><path d="M0.5 5.5l4.8-5h10.5l-4.8 5z" fill="#fffbe6" stroke="#a83200" stroke-width="1" stroke-linejoin="round"/><path d="M11 5.5l4.8-5v10.5l-4.8 5z" fill="#f5ea70" stroke="#a83200" stroke-width="1" stroke-linejoin="round"/></svg>
<div class="t" style="left:103px;top:506px;letter-spacing:0px">6</div>
<div class="t" style="left:159px;top:506px;letter-spacing:0.07px">1.11.50.050050.04 1588144411767</div>
<div class="t" style="left:416px;top:506px;letter-spacing:-0.82px;word-spacing:1.2px">STRUT PROFILE PG50 50X50 4 SLOTS</div>
<div class="t" style="left:618px;top:506px;letter-spacing:0.07px">1.11.50.050050.04 1588144411767.ipt</div>
<div class="t" style="right:395px;top:506px;letter-spacing:0">1</div>
<div class="t" style="right:329px;top:506px;letter-spacing:0">1</div>
<div class="t" style="left:963px;top:506px;letter-spacing:-0.2px">Part</div>
<div class="t" style="left:1134px;top:506px;letter-spacing:-0.2px">No</div>


<div class="a" style="left:1282px;top:158px;width:1px;height:443px;background:#a8a8a8"></div>
<!-- bottom band + status -->
<div class="a" style="left:1px;top:601px;width:1282px;height:16px;background:#d3d3d3"></div>
<div class="t" style="left:5px;top:622px;font-size:12px;letter-spacing:-0.2px">Loaded Model State:</div>
<div class="t" style="left:123px;top:622px;font-size:12px;letter-spacing:-0.2px">Master</div>
<svg class="a" style="left:1270px;top:624px" width="12" height="12" viewBox="0 0 12 12"><path d="M8 1h2v2h-2zM4 5h2v2h-2zM8 5h2v2h-2zM0 9h2v2h-2zM4 9h2v2h-2zM8 9h2v2h-2z" fill="#8a8a8a"/></svg>
<div class="a" style="left:0;top:0;width:1px;height:639px;background:#4e6d9b"></div>
<div class="a" style="right:0;top:0;width:1px;height:639px;background:#4e6d9b"></div>
<div class="a" style="left:0;bottom:0;width:1284px;height:1px;background:#4e6d9b"></div>
</body></html>
